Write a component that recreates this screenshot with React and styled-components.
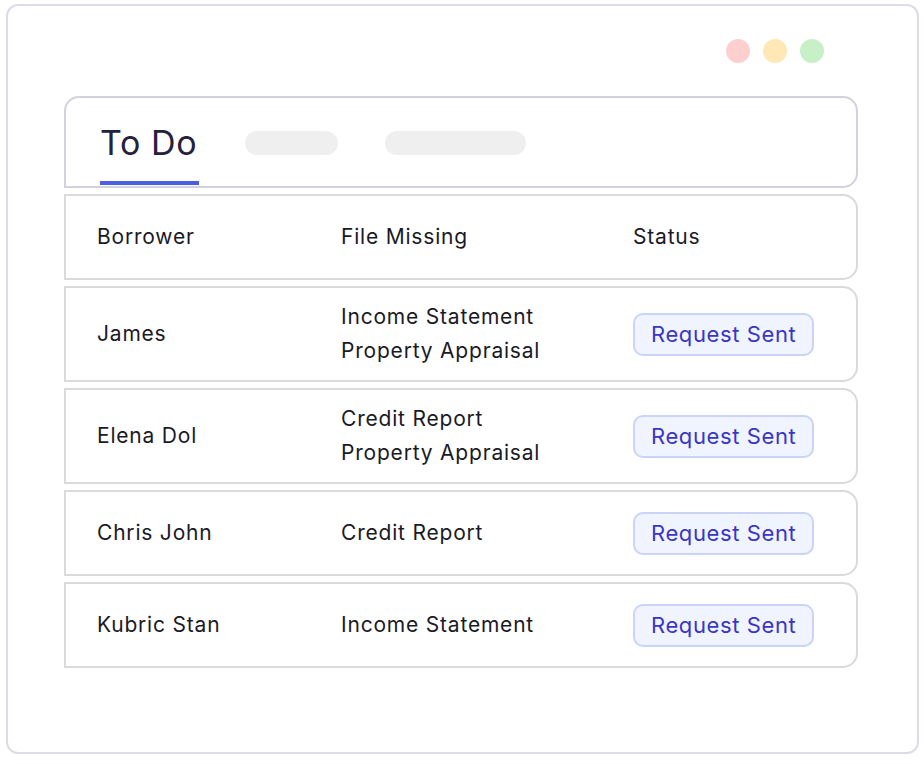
import React from 'react';
import styled, { createGlobalStyle } from 'styled-components';

const rows = [
    { name: 'James', files: ['Income Statement', 'Property Appraisal'] },
    { name: 'Elena Dol', files: ['Credit Report', 'Property Appraisal'] },
    { name: 'Chris John', files: ['Credit Report'] },
    { name: 'Kubric Stan', files: ['Income Statement'] },
];

export default function App() {
    return (
        <>
            <GlobalStyle />
            <Frame>
                <Lights>
                    <Light color="#ffcfcf" />
                    <Light color="#ffe8b5" />
                    <Light color="#c8f0c6" />
                </Lights>
                <Cards>
                    <TabsCard>
                        <Tab>
                            <TabLabel>To Do</TabLabel>
                            <TabLine />
                        </Tab>
                        <Pill width={93} />
                        <Pill width={141} />
                    </TabsCard>
                    <Row header>
                        <Cell>Borrower</Cell>
                        <Cell>File Missing</Cell>
                        <Cell>Status</Cell>
                    </Row>
                    {rows.map(r => (
                        <Row key={r.name}>
                            <Cell>{r.name}</Cell>
                            <Cell>
                                {r.files.map(f => <FileLine key={f}>{f}</FileLine>)}
                            </Cell>
                            <Cell>
                                <Badge>Request Sent</Badge>
                            </Cell>
                        </Row>
                    ))}
                </Cards>
            </Frame>
        </>
    );
}

/********************** Styled Components **********************/

const GlobalStyle = createGlobalStyle`
    body {
        margin: 0;
        background: #ffffff;
        font-family: Inter, "Liberation Sans", sans-serif;
    }
`;

const Frame = styled.div`
    box-sizing: border-box;
    margin: 4px 0 0 6px;
    width: 913px;
    height: 750px;
    border: 2px solid #dcdce6;
    border-radius: 12px;
    padding: 33px 0 0 56px;
    background: #fff;
`;

const Lights = styled.div`
    display: flex;
    justify-content: flex-end;
    gap: 13px;
    padding-right: 93px;
`;

const Light = styled.span`
    width: 24px;
    height: 24px;
    border-radius: 50%;
    background: ${props => props.color};
`;

const Cards = styled.div`
    display: flex;
    flex-direction: column;
    gap: 6px;
    width: 794px;
    margin-top: 33px;
`;

const TabsCard = styled.div`
    box-sizing: border-box;
    height: 92px;
    border: 2px solid #d1d2dc;
    border-radius: 15px 15px 15px 0;
    padding: 0 0 0 34px;
    display: flex;
    align-items: flex-start;
`;

const Tab = styled.div`
    display: flex;
    flex-direction: column;
    justify-content: space-between;
    height: 100%;
    margin-right: 46px;
`;

const TabLabel = styled.div`
    font-size: 34px;
    line-height: 40px;
    margin-top: 25px;
    color: #24213d;
    letter-spacing: 0.6px;
`;

const TabLine = styled.div`
    height: 4px;
    width: 99px;
    background: #4b5ee4;
    margin-bottom: 1px;
`;

const Pill = styled.div`
    width: ${props => props.width}px;
    height: 24px;
    margin-top: 33px;
    margin-right: 47px;
    border-radius: 12px;
    background: #efefef;
    filter: blur(0.6px);
`;

const Row = styled.div`
    box-sizing: border-box;
    min-height: 86px;
    border: 2px solid #dadada;
    border-radius: 0 15px 15px 0;
    padding: 12px 0 12px 31px;
    display: grid;
    grid-template-columns: 244px 292px auto;
    align-items: center;
    font-size: 21px;
    letter-spacing: 0.8px;
    color: #1a1a26;
`;

const Cell = styled.div`
    line-height: 34px;
`;

const FileLine = styled.div``;

const Badge = styled.span`
    display: inline-flex;
    align-items: center;
    box-sizing: border-box;
    height: 43px;
    padding: 0 16px;
    border: 2px solid #c8d5f6;
    border-radius: 10px;
    background: #f0f4ff;
    color: #3a35c6;
    font-size: 22px;
    letter-spacing: 0.6px;
`;
